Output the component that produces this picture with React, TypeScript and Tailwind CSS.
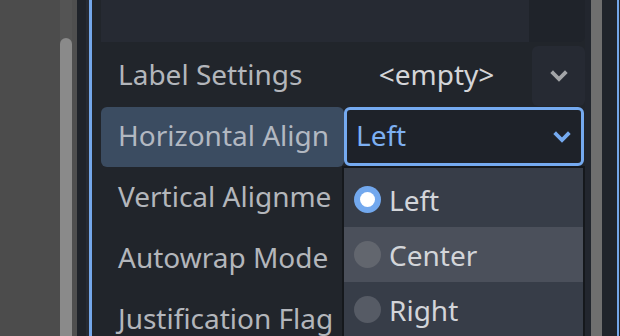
import React from "react";

const font = { fontFamily: '"Noto Sans", sans-serif' };

function Chevron({ color }: { color: string }) {
  return (
    <svg width="18" height="12" viewBox="0 0 18 12">
      <path d="M3 3 L9 9 L15 3" fill="none" stroke={color} strokeWidth="3.8" strokeLinecap="square" />
    </svg>
  );
}

function Radio({ kind }: { kind: "on" | "hover" | "off" }) {
  if (kind === "on")
    return (
      <div className="w-[27px] h-[27px] rounded-full bg-[#72a8ee] flex items-center justify-center shrink-0">
        <div className="w-[15px] h-[15px] rounded-full bg-white" />
      </div>
    );
  return (
    <div
      className={
        kind === "hover"
          ? "w-[27px] h-[27px] rounded-full bg-[#62666e] shrink-0"
          : "w-[27px] h-[27px] rounded-full bg-[#565b65] shrink-0"
      }
    />
  );
}

function LabelRow({ text }: { text: string }) {
  return (
    <div className="h-[61px] shrink-0 flex items-center pb-[4px]">
      <div className="w-[231px] pl-[17px] overflow-hidden whitespace-nowrap text-[28px] text-[#b3b6bb]">{text}</div>
    </div>
  );
}

export default function App() {
  return (
    <div className="w-[620px] h-[336px] flex overflow-hidden bg-[#21252b]" style={font}>
      <div className="w-[60px] shrink-0 bg-[#4c4c4c]" />
      <div className="w-[12px] shrink-0 bg-[#545454] flex flex-col">
        <div className="h-[38px] shrink-0" />
        <div className="flex-1 rounded-t-full bg-[#8a8a8a]" />
      </div>
      <div className="w-[5px] shrink-0 bg-[#4f4f4f]" />
      <div className="w-[9px] shrink-0 bg-[#1f232a]" />
      <div className="w-[3px] shrink-0 bg-[#262a33]" />
      <div className="w-[3px] shrink-0 bg-[#74a7ea]" />
      <div className="w-[9px] shrink-0 bg-[#21252b]" />
      <div className="w-[484px] shrink-0 relative flex flex-col">
        <div className="h-[42px] shrink-0 flex">
          <div className="w-[428px] bg-[#262a33]" />
          <div className="flex-1 bg-[#1f232a] rounded-br-[6px]" />
        </div>
        <div className="h-[4px] shrink-0" />
        <div className="h-[60px] shrink-0 flex items-center">
          <div className="w-[243px] pl-[17px] pb-[4px] whitespace-nowrap text-[28px] text-[#b3b6bb]">Label Settings</div>
          <div className="w-[185px] pb-[4px] text-center text-[28px] text-[#d4d5d8]">&lt;empty&gt;</div>
          <div className="ml-[3px] w-[53px] h-[60px] rounded-[6px] bg-[#262a33] flex items-center justify-center">
            <Chevron color="#a3a5a8" />
          </div>
        </div>
        <div className="h-[1px] shrink-0" />
        <div className="h-[60px] shrink-0 flex">
          <div className="w-[243px] rounded-[6px] bg-[#3b4c61] flex items-center pl-[17px] pb-[4px] whitespace-nowrap text-[28px] text-[#b2b8c1]">
            Horizontal Align
          </div>
          <div className="w-[240px] h-[59px] rounded-[6px] border-[3px] border-[#75aaf0] bg-[#1e2229] flex items-center justify-between pl-[9px] pr-[10px]">
            <span className="text-[28px] text-[#7db0f2] pb-[3px]">Left</span>
            <Chevron color="#75aaf0" />
          </div>
        </div>
        <LabelRow text="Vertical Alignment" />
        <LabelRow text="Autowrap Mode" />
        <LabelRow text="Justification Flags" />

        <div className="absolute left-[241px] top-[166px] w-[243px] h-[180px] bg-[#373d48] border-l-2 border-r-2 border-t-2 border-[#15181c] flex flex-col pt-[4px]">
          <div className="h-[55px] shrink-0 flex items-center gap-[8px] pl-[10px] text-[28px] text-[#d3d5d9]">
            <Radio kind="on" />
            <span>Left</span>
          </div>
          <div className="h-[55px] shrink-0 flex items-center gap-[8px] pl-[10px] bg-[#4b505b] text-[28px] text-[#d3d5d9]">
            <Radio kind="hover" />
            <span>Center</span>
          </div>
          <div className="h-[55px] shrink-0 flex items-center gap-[8px] pl-[10px] text-[28px] text-[#d3d5d9]">
            <Radio kind="off" />
            <span>Right</span>
          </div>
        </div>
      </div>
      <div className="w-[6px] shrink-0 bg-[#22262e]" />
      <div className="w-[11px] shrink-0 bg-[#6f6f6f]" />
      <div className="w-[15px] shrink-0 bg-[#20242b]" />
      <div className="w-[2px] shrink-0 bg-[#74a7ea]" />
    </div>
  );
}
